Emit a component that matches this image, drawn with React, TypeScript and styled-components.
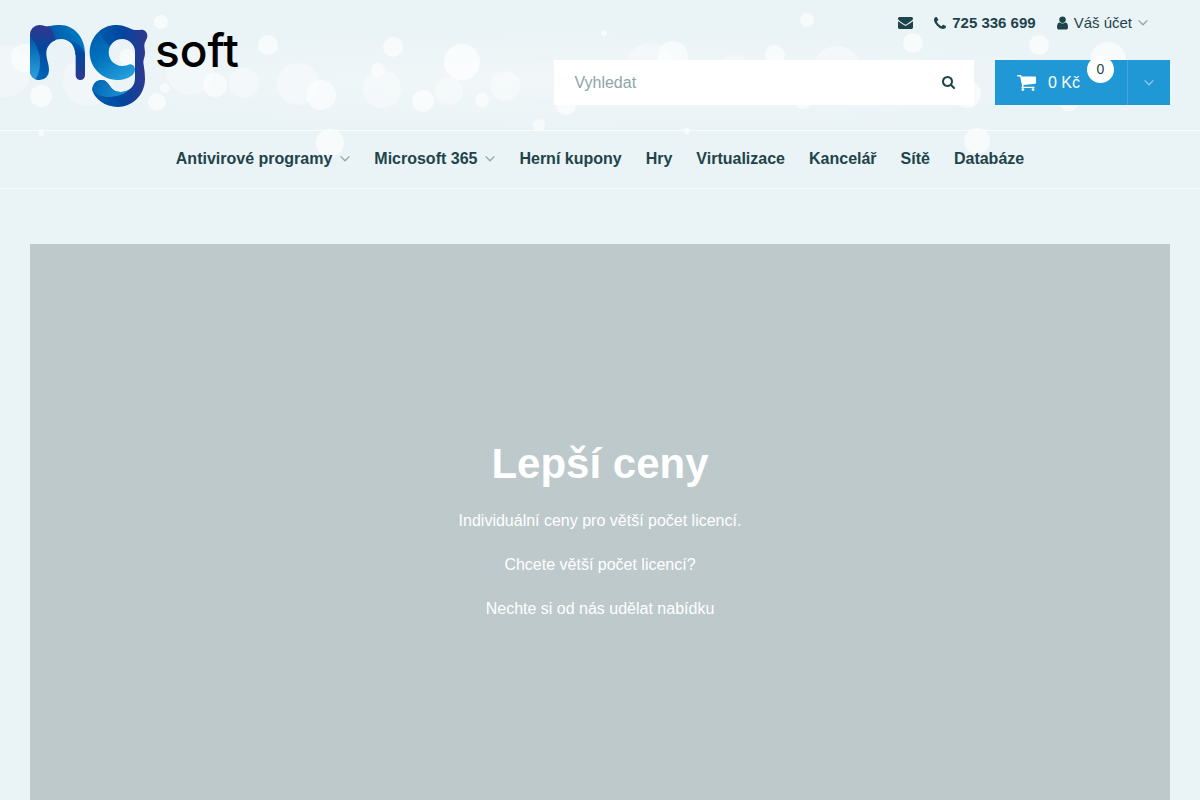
import React from "react";
import styled, { createGlobalStyle } from "styled-components";

const ink = "#1e444b";
const muted = "#8fa5a9";

const GlobalStyle = createGlobalStyle`
  *, *::before, *::after { box-sizing: border-box; }
  body {
    margin: 0;
    background: #eaf3f6;
    color: ${ink};
    font-family: "Liberation Sans", Arial, sans-serif;
    font-size: 16px;
  }
  a { color: inherit; text-decoration: none; }
  button, input { font: inherit; color: inherit; }
`;

const Page = styled.div`
  display: flex;
  flex-direction: column;
  min-height: 100vh;
`;

const Header = styled.header`
  position: relative;
  overflow: hidden;
`;

const Backdrop = styled.svg`
  position: absolute;
  top: 0;
  left: 50%;
  z-index: -1;
  transform: translateX(-50%);
`;

const HeaderBar = styled.div`
  display: flex;
  justify-content: space-between;
  align-items: flex-start;
  height: 130px;
  padding: 0 30px;
`;

const Logo = styled.a`
  display: flex;
  align-items: flex-start;
  gap: 7px;
  padding-top: 25px;
  color: #000;
`;

const LogoText = styled.span`
  font-family: Inter, "Liberation Sans", sans-serif;
  font-size: 46px;
  font-weight: 500;
  line-height: 50px;
`;

const HeaderSide = styled.div`
  display: flex;
  flex-direction: column;
  width: 54%;
`;

const TopLinks = styled.div`
  display: flex;
  justify-content: flex-end;
  align-items: center;
  gap: 21px;
  height: 60px;
  padding: 0 22px 15px 0;
  font-size: 15px;
  line-height: 20px;
`;

const TopLink = styled.a<{ $bold?: boolean }>`
  display: flex;
  align-items: center;
  gap: 6px;
  font-weight: ${(p) => (p.$bold ? 700 : 400)};
`;

const AccountButton = styled.button`
  display: flex;
  align-items: center;
  gap: 6px;
  padding: 0;
  border: 0;
  background: none;
  cursor: pointer;
`;

const Actions = styled.div`
  display: flex;
  gap: 21px;
  height: 45px;
`;

const Search = styled.form`
  display: flex;
  flex: 1;
  background: #fff;
`;

const SearchInput = styled.input`
  flex: 1;
  min-width: 0;
  padding: 0 20px;
  border: 0;
  outline: 0;
  background: none;
  &::placeholder { color: ${muted}; opacity: 1; }
`;

const SearchButton = styled.button`
  display: flex;
  align-items: center;
  justify-content: center;
  width: 51px;
  padding: 0;
  border: 0;
  background: none;
  cursor: pointer;
`;

const Cart = styled.div`
  position: relative;
  display: flex;
  width: 175px;
  background: #2098d6;
  color: #fff;
`;

const CartLink = styled.a`
  display: flex;
  flex: 1;
  align-items: center;
  gap: 12px;
  padding-left: 22px;
`;

const CartToggle = styled.button`
  display: flex;
  align-items: center;
  justify-content: center;
  width: 43px;
  padding: 0;
  border: 0;
  border-left: 1px solid #41a7dc;
  background: none;
  cursor: pointer;
`;

const CartBadge = styled.span`
  position: absolute;
  top: -4px;
  left: 92px;
  width: 27px;
  height: 27px;
  border-radius: 50%;
  background: #fff;
  color: ${ink};
  font-size: 14px;
  line-height: 27px;
  text-align: center;
`;

const Nav = styled.nav`
  display: flex;
  justify-content: center;
  align-items: center;
  gap: 24px;
  height: 59px;
  border-top: 1px solid #fbfdfd;
  border-bottom: 1px solid #fbfdfd;
  padding-bottom: 2px;
  font-weight: 700;
`;

const NavLink = styled.a`
  display: flex;
  align-items: center;
  gap: 8px;
  line-height: 24px;
`;

const Main = styled.main`
  display: flex;
  flex: 1;
  padding: 55px 30px 0;
`;

const Hero = styled.section`
  flex: 1;
  padding: 193px 20px 40px;
  background: #bec9cb;
  color: #fff;
  text-align: center;
`;

const HeroTitle = styled.h1`
  margin: 0 0 18px;
  font-size: 42px;
  line-height: 54px;
`;

const HeroText = styled.p`
  margin: 0 0 20px;
  line-height: 24px;
`;

const glyphs = {
  search:
    "M1216 832q0-185-131.5-316.5t-316.5-131.5-316.5 131.5-131.5 316.5 131.5 316.5 316.5 131.5 316.5-131.5 131.5-316.5zm512 832q0 52-38 90t-90 38q-54 0-90-38l-343-342q-179 124-399 124-143 0-273.5-55.5t-225-150-150-225-55.5-273.5 55.5-273.5 150-225 225-150 273.5-55.5 273.5 55.5 225 150 150 225 55.5 273.5q0 220-124 399l343 343q37 37 37 90z",
  cart:
    "M704 1536q0 52-38 90t-90 38-90-38-38-90 38-90 90-38 90 38 38 90zm896 0q0 52-38 90t-90 38-90-38-38-90 38-90 90-38 90 38 38 90zm128-1088v512q0 24-16.5 42.5t-40.5 21.5l-1044 122q13 60 13 70 0 16-24 64h920q26 0 45 19t19 45-19 45-45 19h-1024q-26 0-45-19t-19-45q0-11 8-31.5t16-36 21.5-40 15.5-29.5l-177-823h-204q-26 0-45-19t-19-45 19-45 45-19h256q16 0 28.5 6.5t19.5 15.5 13 24.5 8 26 5.5 29.5 4.5 26h1201q26 0 45 19t19 45z",
  envelope:
    "M1792 710v794q0 66-47 113t-113 47h-1472q-66 0-113-47t-47-113v-794q44 49 101 87 362 246 497 345 57 42 92.5 65.5t94.5 48 110 24.5h2q51 0 110-24.5t94.5-48 92.5-65.5q170-123 498-345 57-39 100-87zm0-294q0 79-49 151t-122 123q-376 261-468 325-10 7-42.5 31t-54 38.5-52 32.5-57.5 27-50 9h-2q-23 0-50-9t-57.5-27-52-32.5-54-38.5-42.5-31q-91-64-262-182.5t-205-142.5q-62-42-117-115.5t-55-136.5q0-78 41.5-130t118.5-52h1472q65 0 112.5 47t47.5 113z",
  phone:
    "M1600 1240q0 27-10 70.5t-21 68.5q-21 50-122 106-94 51-186 51-27 0-53-3.5t-57.5-12.5-47-14.5-55.5-20.5-49-18q-98-35-175-83-127-79-264-216t-216-264q-48-77-83-175-3-9-18-49t-20.5-55.5-14.5-47-12.5-57.5-3.5-53q0-92 51-186 56-101 106-122 25-11 68.5-21t70.5-10q14 0 21 3 18 6 53 76 11 19 30 54t35 63.5 31 53.5q3 4 17.5 25t21.5 35.5 7 28.5q0 20-28.5 50t-62 55-62 53-28.5 46q0 9 5 22.5t8.5 20.5 14 24 11.5 19q76 137 174 235t235 174q2 1 19 11.5t24 14 20.5 8.5 22.5 5q18 0 46-28.5t53-62 55-62 50-28.5q14 0 28.5 7t35.5 21.5 25 17.5q25 15 53.5 31t63.5 35 54 30q70 35 76 53 3 7 3 21z",
  user:
    "M1536 1399q0 109-62.5 187t-150.5 78h-854q-88 0-150.5-78t-62.5-187q0-85 8.5-160.5t31.5-152 58.5-131 94-89 134.5-34.5q131 128 313 128t313-128q76 0 134.5 34.5t94 89 58.5 131 31.5 152 8.5 160.5zm-256-887q0 159-112.5 271.5t-271.5 112.5-271.5-112.5-112.5-271.5 112.5-271.5 271.5-112.5 271.5 112.5 112.5 271.5z",
};

type GlyphProps = { name: keyof typeof glyphs; width: number; height: number; viewBox: string };

const Glyph = ({ name, width, height, viewBox }: GlyphProps) => (
  <svg width={width} height={height} viewBox={viewBox} fill="currentColor" aria-hidden="true">
    <path d={glyphs[name]} />
  </svg>
);

const Chevron = ({ color = muted }: { color?: string }) => (
  <svg width="10" height="7" viewBox="0 0 10 7" fill="none" stroke={color} strokeWidth="1.3" aria-hidden="true">
    <path d="M.6 1.4 5 5.8 9.4 1.4" />
  </svg>
);

/* x, y, radius, opacity */
const bubbles: number[][] = [
  [5, 71, 26, 0.35], [25, 58, 14, 0.6], [41, 96, 11, 0.65], [41, 133, 3, 0.65], [88, 81, 25, 0.3],
  [127, 57, 8, 0.6], [161, 22, 7, 0.65], [157, 102, 9, 0.6], [165, 88, 5, 0.5], [190, 71, 24, 0.3],
  [215, 85, 12, 0.6], [244, 83, 15, 0.35], [268, 45, 10, 0.65], [298, 84, 21, 0.35], [321, 95, 15, 0.6],
  [330, 143, 14, 0.65], [382, 89, 19, 0.35], [378, 70, 7, 0.6], [393, 47, 10, 0.65], [423, 101, 11, 0.65],
  [449, 91, 14, 0.35], [462, 62, 18, 0.65], [482, 100, 7, 0.6], [505, 86, 15, 0.35], [539, 125, 6, 0.6],
  [566, 105, 10, 0.65], [604, 33, 3, 0.65], [650, 68, 25, 0.35], [673, 56, 15, 0.6], [687, 131, 3, 0.65],
  [735, 73, 18, 0.3], [775, 55, 10, 0.65], [803, 100, 9, 0.6], [807, 20, 7, 0.65], [837, 70, 24, 0.4],
  [913, 43, 10, 0.65], [967, 94, 14, 0.6], [977, 141, 13, 0.65], [1039, 45, 10, 0.65], [1069, 100, 11, 0.6],
  [1108, 60, 18, 0.65],
];

const Bubbles = () => (
  <Backdrop width="1200" height="190" viewBox="0 0 1200 190" aria-hidden="true">
    <defs>
      <radialGradient id="haze">
        <stop offset="0" stopColor="#fff" stopOpacity="0.35" />
        <stop offset="1" stopColor="#fff" stopOpacity="0" />
      </radialGradient>
    </defs>
    <ellipse cx="560" cy="80" rx="580" ry="52" fill="url(#haze)" />
    {bubbles.map(([x, y, r, o]) => (
      <circle key={`${x}-${y}`} cx={x} cy={y} r={r} fill="#fff" fillOpacity={o} />
    ))}
  </Backdrop>
);

const LogoMark = () => (
  <svg width="118" height="82" viewBox="90 75 354 246" aria-hidden="true">
    <defs>
      <linearGradient id="stem" gradientUnits="userSpaceOnUse" x1="128" y1="88" x2="120" y2="240">
        <stop offset="0" stopColor="#2b3990" />
        <stop offset=".4" stopColor="#00479f" />
        <stop offset="1" stopColor="#0068b7" />
      </linearGradient>
      <linearGradient id="leaf" gradientUnits="userSpaceOnUse" x1="100" y1="110" x2="100" y2="238">
        <stop offset="0" stopColor="#0054a6" />
        <stop offset="1" stopColor="#2ba5e0" />
      </linearGradient>
      <linearGradient id="arch" gradientUnits="userSpaceOnUse" x1="165" y1="120" x2="225" y2="90">
        <stop offset="0" stopColor="#005bac" />
        <stop offset="1" stopColor="#0078c1" />
      </linearGradient>
      <linearGradient id="leg" gradientUnits="userSpaceOnUse" x1="240" y1="120" x2="240" y2="235">
        <stop offset="0" stopColor="#0062b2" />
        <stop offset=".35" stopColor="#00479f" />
        <stop offset="1" stopColor="#2b3990" />
      </linearGradient>
      <linearGradient id="bowl" gradientUnits="userSpaceOnUse" x1="290" y1="90" x2="385" y2="235">
        <stop offset="0" stopColor="#005bac" />
        <stop offset=".45" stopColor="#0074bf" />
        <stop offset="1" stopColor="#27a0dc" />
      </linearGradient>
      <linearGradient id="side" gradientUnits="userSpaceOnUse" x1="300" y1="0" x2="430" y2="0">
        <stop offset="0" stopColor="#0059ab" />
        <stop offset=".5" stopColor="#00479f" />
        <stop offset="1" stopColor="#2b3990" />
      </linearGradient>
      <linearGradient id="tail" gradientUnits="userSpaceOnUse" x1="285" y1="250" x2="380" y2="290">
        <stop offset="0" stopColor="#0068b7" />
        <stop offset="1" stopColor="#2096d6" />
      </linearGradient>
    </defs>
    <path fill="url(#arch)" d="M140 80L146 79C157 76 168 75 181 75C222 75 255 113 255 160V175L226 165C226 136 208 117 183 117Q170 117 158 124Z" />
    <path fill="url(#stem)" d="M90 103A28 28 0 0 1 118 75C130 75 137 80 146 79C158 92 165 106 166 121C149 129 139 143 139 160C139 180 147 190 147 211A28 28 0 0 1 119 240C102 240 90 228 90 212Z" />
    <path fill="url(#leaf)" d="M90 108C108 130 120 155 120 185C120 208 116 224 106 237C96 232 90 223 90 212Z" />
    <path fill="url(#leg)" d="M190 117C228 122 250 138 255 165V226A14 14 0 0 1 227 226V165C226 138 211 119 190 117Z" />
    <path fill="url(#side)" d="M298 93C314 80 332 75 351 75C372 75 388 86 404 90C411 91 417 89 424 89C435 89 442 97 442 107C442 118 434 123 433 136C433 145 435 151 435 160C435 171 430 178 430 187C431 198 435 212 435 238C434 287 396 321 353 321C315 321 284 297 277 271C277 252 289 240 305 240C330 240 327 276 362 276C386 276 405 260 405 235V157A39 39 0 0 0 366 117C350 117 335 127 329 142C313 132 301 115 298 93Z" />
    <path fill="url(#bowl)" d="M299 93C280 108 269 132 269 157C269 203 306 240 351 240C375 240 399 230 404 215C408 204 401 193 390 193C380 196 378 198 366 198C344 198 326 180 326 157Q326 148 330 138C315 128 304 113 299 93Z" />
    <path fill="url(#tail)" d="M277 271C277 252 289 240 305 240C330 240 327 276 362 276Q376 276 387 270C366 288 340 291 322 291C301 290 290 284 277 271Z" />
  </svg>
);

const navItems: { label: string; menu?: boolean }[] = [
  { label: "Antivirové programy", menu: true },
  { label: "Microsoft 365", menu: true },
  { label: "Herní kupony" },
  { label: "Hry" },
  { label: "Virtualizace" },
  { label: "Kancelář" },
  { label: "Sítě" },
  { label: "Databáze" },
];

export default function App() {
  return (
    <Page>
      <GlobalStyle />
      <Header>
        <Bubbles />
        <HeaderBar>
          <Logo href="#" aria-label="ng soft">
            <LogoMark />
            <LogoText>soft</LogoText>
          </Logo>
          <HeaderSide>
            <TopLinks>
              <TopLink href="#" aria-label="E-mail">
                <Glyph name="envelope" width={15} height={12} viewBox="0 256 1792 1408" />
              </TopLink>
              <TopLink href="#" $bold>
                <Glyph name="phone" width={12} height={12} viewBox="192 128 1408 1408" />
                725 336 699
              </TopLink>
              <AccountButton type="button">
                <Glyph name="user" width={11} height={14} viewBox="256 128 1280 1536" />
                Váš účet
                <Chevron />
              </AccountButton>
            </TopLinks>
            <Actions>
              <Search role="search">
                <SearchInput type="search" placeholder="Vyhledat" aria-label="Vyhledat" />
                <SearchButton type="button" aria-label="Hledat">
                  <Glyph name="search" width={13} height={13} viewBox="64 128 1664 1664" />
                </SearchButton>
              </Search>
              <Cart>
                <CartLink href="#">
                  <Glyph name="cart" width={19} height={16} viewBox="64 256 1664 1408" />
                  0 Kč
                </CartLink>
                <CartToggle type="button" aria-label="Zobrazit košík">
                  <Chevron color="#90ccec" />
                </CartToggle>
                <CartBadge>0</CartBadge>
              </Cart>
            </Actions>
          </HeaderSide>
        </HeaderBar>
        <Nav>
          {navItems.map((item) => (
            <NavLink href="#" key={item.label}>
              {item.label}
              {item.menu && <Chevron />}
            </NavLink>
          ))}
        </Nav>
      </Header>
      <Main>
        <Hero>
          <HeroTitle>Lepší ceny</HeroTitle>
          <HeroText>Individuální ceny pro větší počet licencí.</HeroText>
          <HeroText>Chcete větší počet licencí?</HeroText>
          <HeroText>Nechte si od nás udělat nabídku</HeroText>
        </Hero>
      </Main>
    </Page>
  );
}
